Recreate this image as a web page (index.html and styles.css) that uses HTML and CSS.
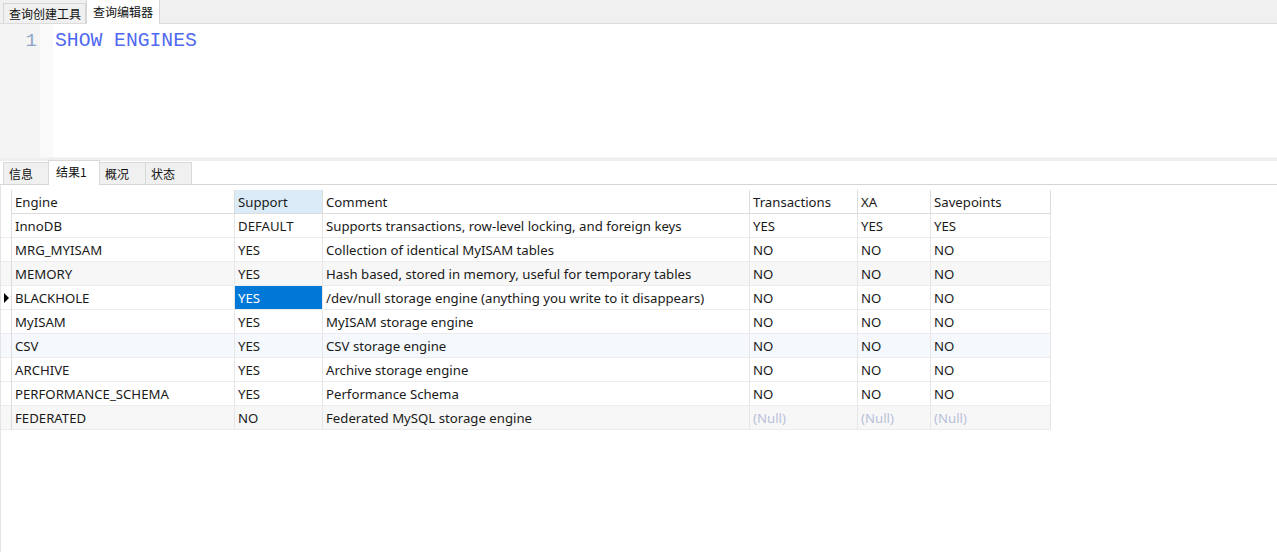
FILE: index.html
```html
<!DOCTYPE html>
<html lang="zh">
<head>
<meta charset="utf-8">
<title>查询编辑器</title>
<link rel="stylesheet" href="styles.css">
</head>
<body>
<div class="toptabs">
  <div class="tab">查询创建工具</div>
  <div class="tab active">查询编辑器</div>
</div>
<div class="editor">
  <div class="gutter"><span class="lineno">1</span></div>
  <div class="fold"></div>
  <div class="code"><span class="kw">SHOW ENGINES</span></div>
</div>
<div class="splitter"></div>
<div class="restabs">
  <div class="rtab w45">信息</div>
  <div class="rtab active w51">结果1</div>
  <div class="rtab w46">概况</div>
  <div class="rtab w46">状态</div>
</div>
<div class="results">
  <div class="grid">
    <div class="c ind hd"></div>
    <div class="c hd">Engine</div>
    <div class="c hd sel-col">Support</div>
    <div class="c hd">Comment</div>
    <div class="c hd">Transactions</div>
    <div class="c hd">XA</div>
    <div class="c hd">Savepoints</div>

    <div class="c ind"></div>
    <div class="c">InnoDB</div>
    <div class="c">DEFAULT</div>
    <div class="c">Supports transactions, row-level locking, and foreign keys</div>
    <div class="c">YES</div>
    <div class="c">YES</div>
    <div class="c">YES</div>

    <div class="c ind"></div>
    <div class="c">MRG_MYISAM</div>
    <div class="c">YES</div>
    <div class="c">Collection of identical MyISAM tables</div>
    <div class="c">NO</div>
    <div class="c">NO</div>
    <div class="c">NO</div>

    <div class="c ind gray"></div>
    <div class="c gray">MEMORY</div>
    <div class="c gray">YES</div>
    <div class="c gray">Hash based, stored in memory, useful for temporary tables</div>
    <div class="c gray">NO</div>
    <div class="c gray">NO</div>
    <div class="c gray">NO</div>

    <div class="c ind"><span class="arrow"></span></div>
    <div class="c">BLACKHOLE</div>
    <div class="c selected">YES</div>
    <div class="c">/dev/null storage engine (anything you write to it disappears)</div>
    <div class="c">NO</div>
    <div class="c">NO</div>
    <div class="c">NO</div>

    <div class="c ind"></div>
    <div class="c">MyISAM</div>
    <div class="c">YES</div>
    <div class="c">MyISAM storage engine</div>
    <div class="c">NO</div>
    <div class="c">NO</div>
    <div class="c">NO</div>

    <div class="c ind blue"></div>
    <div class="c blue">CSV</div>
    <div class="c blue">YES</div>
    <div class="c blue">CSV storage engine</div>
    <div class="c blue">NO</div>
    <div class="c blue">NO</div>
    <div class="c blue">NO</div>

    <div class="c ind"></div>
    <div class="c">ARCHIVE</div>
    <div class="c">YES</div>
    <div class="c">Archive storage engine</div>
    <div class="c">NO</div>
    <div class="c">NO</div>
    <div class="c">NO</div>

    <div class="c ind"></div>
    <div class="c">PERFORMANCE_SCHEMA</div>
    <div class="c">YES</div>
    <div class="c">Performance Schema</div>
    <div class="c">NO</div>
    <div class="c">NO</div>
    <div class="c">NO</div>

    <div class="c ind gray"></div>
    <div class="c gray">FEDERATED</div>
    <div class="c gray">NO</div>
    <div class="c gray">Federated MySQL storage engine</div>
    <div class="c gray null">(Null)</div>
    <div class="c gray null">(Null)</div>
    <div class="c gray null">(Null)</div>
  </div>
</div>
</body>
</html>
```
FILE: styles.css
```css
html, body {
  margin: 0;
  padding: 0;
  background: #ffffff;
  width: 1277px;
  height: 552px;
  overflow: hidden;
}
body {
  font-family: "Noto Sans", "Noto Sans CJK SC", sans-serif;
  font-size: 13.2px;
  color: #1a1a1a;
}

.toptabs {
  height: 23px;
  background: #f0f0f0;
  border-bottom: 1px solid #dcdcdc;
  display: flex;
  align-items: flex-end;
  padding-left: 3px;
}
.tab {
  height: 20px;
  box-sizing: border-box;
  border: 1px solid #d6d6d6;
  border-bottom: none;
  background: #f0f0f0;
  padding: 0 4px 0 5px;
  font-family: "Noto Sans CJK SC", sans-serif;
  font-size: 12px;
  line-height: 19px;
  color: #111;
}
.tab.active {
  height: 24px;
  margin-bottom: -1px;
  background: #ffffff;
  border-top: none;
  padding: 0 6px;
  line-height: 23px;
}

.editor {
  height: 133px;
  display: flex;
}
.gutter {
  width: 40px;
  background: #f4f4f4;
  box-sizing: border-box;
  padding-right: 3px;
  text-align: right;
}
.lineno {
  font-family: "Liberation Mono", monospace;
  font-size: 19px;
  line-height: 34px;
  color: #8fa3c8;
}
.fold {
  width: 13px;
  background: #f9f9f9;
}
.code {
  flex: 1;
  padding-left: 2px;
  background: #ffffff;
}
.kw {
  font-family: "Liberation Mono", monospace;
  font-size: 19.7px;
  line-height: 34px;
  color: #5169f0;
}

.splitter {
  height: 3px;
  background: #eeeeee;
  border-top: 1px solid #f5f5f5;
}

.restabs {
  height: 24px;
  box-sizing: border-box;
  border-bottom: 1px solid #d6d6d6;
  display: flex;
  align-items: flex-end;
  padding-left: 3px;
}
.rtab {
  height: 22px;
  box-sizing: border-box;
  border: 1px solid #d9d9d9;
  border-bottom: none;
  background: #f0f0f0;
  padding-left: 5px;
  font-family: "Noto Sans CJK SC", sans-serif;
  font-size: 12px;
  line-height: 21px;
  color: #111;
  margin-right: -1px;
}
.rtab.active {
  height: 25px;
  margin-bottom: -1px;
  background: #ffffff;
  padding-left: 7px;
  line-height: 22px;
  position: relative;
  z-index: 1;
}
.w45 { width: 46px; }
.w51 { width: 52px; }
.w46 { width: 47px; }

.results {
  height: 368px;
  box-sizing: border-box;
  padding-top: 5px;
  border-left: 1px solid #e4e4e4;
}
.grid {
  display: grid;
  grid-template-columns: 11px 223px 88px 427px 108px 73px 120px;
  grid-auto-rows: 24px;
  width: 1050px;
}
.c {
  box-sizing: border-box;
  border-right: 1px solid #e6e6e6;
  border-bottom: 1px solid #ececec;
  padding-left: 3px;
  line-height: 25px;
  white-space: nowrap;
  overflow: hidden;
  color: #1a1a1a;
}
.c.hd {
  border-right-color: #dcdcdc;
  border-bottom-color: #dcdcdc;
  background: #ffffff;
}
.c.hd.ind {
  border-bottom-color: #ffffff;
}
.c.sel-col {
  background: #dcebf8;
}
.c.ind {
  padding-left: 0;
  border-right-color: #dcdcdc;
  display: flex;
  align-items: center;
  justify-content: center;
}
.gray { background: #f7f7f7; }
.blue { background: #f5f9fd; }
.c.selected {
  background: #0078d7;
  color: #ffffff;
}
.c.null {
  color: #b9c0da;
}
.arrow {
  width: 0;
  height: 0;
  border-top: 5px solid transparent;
  border-bottom: 5px solid transparent;
  border-left: 5px solid #000000;
  margin-left: 1px;
}
```
